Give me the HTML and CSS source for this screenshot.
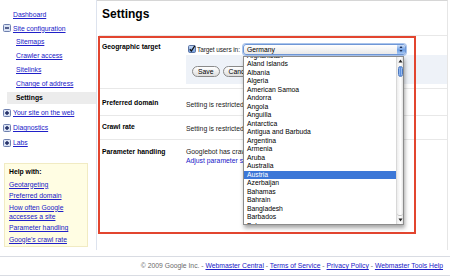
FILE: index.html
```html
<!DOCTYPE html>
<html>
<head>
<meta charset="utf-8">
<link rel="stylesheet" href="styles.css">
</head>
<body>
<div class="page">
  <div class="frame">
    <nav class="sidebar">
      <ul class="nav">
        <li class="nav-item"><a href="#">Dashboard</a></li>
        <li class="nav-item icon"><svg class="tog" viewBox="0 0 8 8" width="8" height="8"><rect x="0.5" y="0.5" width="7" height="7" rx="1" fill="#d9e2f3" stroke="#6d7fae"/><path d="M2 4H6" stroke="#1b2760" stroke-width="1.4"/></svg><a href="#">Site configuration</a></li>
        <li class="nav-sub"><a href="#">Sitemaps</a></li>
        <li class="nav-sub"><a href="#">Crawler access</a></li>
        <li class="nav-sub"><a href="#">Sitelinks</a></li>
        <li class="nav-sub"><a href="#">Change of address</a></li>
        <li class="nav-sub active">Settings</li>
        <li class="nav-item icon group first"><svg class="tog" viewBox="0 0 8 8" width="8" height="8"><rect x="0.5" y="0.5" width="7" height="7" rx="1" fill="#d9e2f3" stroke="#6d7fae"/><path d="M2 4H6M4 2V6" stroke="#1b2760" stroke-width="1.4"/></svg><a href="#">Your site on the web</a></li>
        <li class="nav-item icon group"><svg class="tog" viewBox="0 0 8 8" width="8" height="8"><rect x="0.5" y="0.5" width="7" height="7" rx="1" fill="#d9e2f3" stroke="#6d7fae"/><path d="M2 4H6M4 2V6" stroke="#1b2760" stroke-width="1.4"/></svg><a href="#">Diagnostics</a></li>
        <li class="nav-item icon group"><svg class="tog" viewBox="0 0 8 8" width="8" height="8"><rect x="0.5" y="0.5" width="7" height="7" rx="1" fill="#d9e2f3" stroke="#6d7fae"/><path d="M2 4H6M4 2V6" stroke="#1b2760" stroke-width="1.4"/></svg><a href="#">Labs</a></li>
      </ul>
      <div class="help">
        <div class="help-title">Help with:</div>
        <a class="help-link first" href="#">Geotargeting</a>
        <a class="help-link" href="#">Preferred domain</a>
        <a class="help-link" href="#">How often Google<br>accesses a site</a>
        <a class="help-link" href="#">Parameter handling</a>
        <a class="help-link" href="#">Google's crawl rate</a>
      </div>
    </nav>
    <main class="main">
      <h1 class="title">Settings</h1>
      <div class="settings">
        <div class="row row-geo">
          <div class="label">Geographic target</div>
          <div class="value">
            <div class="target-line">
              <svg class="check" viewBox="0 0 8 8" width="8" height="8"><defs><linearGradient id="cg" x1="0" y1="0" x2="0" y2="1"><stop offset="0" stop-color="#c9dcf7"/><stop offset="1" stop-color="#6f9de0"/></linearGradient></defs><rect x="0.5" y="0.5" width="7" height="7" rx="1.2" fill="url(#cg)" stroke="#5b74a3"/><path d="M1.8 4.2L3.4 6L6.8 0.8" fill="none" stroke="#111" stroke-width="1.3"/></svg>
              <span class="target-text">Target users in:</span>
              <div class="select">
                <span class="select-value">Germany</span>
                <span class="spinner"><svg viewBox="0 0 8 10" width="8" height="10"><path d="M2.5 4L4 2L5.5 4Z M2.5 6L4 8L5.5 6Z" fill="#1a2a50"/></svg></span>
                <div class="dropdown">
                  <ul class="options">
                    <li>Afghanistan</li>
                    <li>Aland Islands</li>
                    <li>Albania</li>
                    <li>Algeria</li>
                    <li>American Samoa</li>
                    <li>Andorra</li>
                    <li>Angola</li>
                    <li>Anguilla</li>
                    <li>Antarctica</li>
                    <li>Antigua and Barbuda</li>
                    <li>Argentina</li>
                    <li>Armenia</li>
                    <li>Aruba</li>
                    <li>Australia</li>
                    <li class="sel">Austria</li>
                    <li>Azerbaijan</li>
                    <li>Bahamas</li>
                    <li>Bahrain</li>
                    <li>Bangladesh</li>
                    <li>Barbados</li>
                    <li>Belarus</li>
                    <li>Belgium</li>
                  </ul>
                  <div class="scrollbar">
                    <svg class="arrow-up" viewBox="0 0 5 4" width="5" height="4"><path d="M0.5 3.5L2.5 0.5L4.5 3.5Z" fill="#222"/></svg>
                    <span class="thumb"></span>
                    <span class="track-end"></span>
                    <svg class="arrow-down" viewBox="0 0 5 4" width="5" height="4"><path d="M0.5 0.5L2.5 3.5L4.5 0.5Z" fill="#222"/></svg>
                  </div>
                </div>
              </div>
            </div>
            <div class="panel">
              <button class="btn">Save</button>
              <button class="btn">Cancel</button>
            </div>
          </div>
        </div>
        <div class="row row-pref">
          <div class="label">Preferred domain</div>
          <div class="value">Setting is restricted to root level sites only.</div>
        </div>
        <div class="row row-crawl">
          <div class="label">Crawl rate</div>
          <div class="value">Setting is restricted to root level sites only.</div>
        </div>
        <div class="row row-param">
          <div class="label">Parameter handling</div>
          <div class="value">Googlebot has crawled these parameters.<br><a class="plain" href="#">Adjust parameter settings</a></div>
        </div>
      </div>
    </main>
  </div>
  <footer class="footer">
    <span class="muted">© 2009 Google Inc. - </span><a href="#">Webmaster Central</a><span class="muted"> - </span><a href="#">Terms of Service</a><span class="muted"> - </span><a href="#">Privacy Policy</a><span class="muted"> - </span><a href="#">Webmaster Tools Help</a>
  </footer>
  <div class="annot"></div>
</div>
</body>
</html>
```

FILE: styles.css
```css
* { box-sizing: border-box; margin: 0; padding: 0; }
html, body { width: 450px; height: 276px; overflow: hidden; background: #fff; }
body { font-family: "Liberation Sans", Arial, sans-serif; font-size: 6.8px; color: #000; }
a { color: #2020c8; text-decoration: underline; }

.page { position: relative; width: 450px; height: 276px; }
.frame { display: flex; height: 250px; }

/* sidebar */
.sidebar { width: 97px; flex: none; border-right: 1px solid #dde3ee; padding-top: 7px; }
.nav { list-style: none; }
.nav-item { display: flex; align-items: center; height: 14px; padding-left: 13px; }
.nav-item.icon { padding-left: 3px; }
.nav-item .tog { flex: none; margin-right: 2px; display: block; }
.nav-item.group { height: 15px; }
.nav-item.group.first { margin-top: 1px; }
.nav-sub { height: 14px; line-height: 14px; padding-left: 16px; }
.nav-sub.active { margin: 1px 0 1px 7px; height: 12px; line-height: 12px; padding-left: 9px; background: #ececec; font-weight: bold; color: #000; }

.help { margin: 13px 0 0 4px; width: 84px; height: 84px; background: #fffde3; border: 1px solid #f1ebc3; padding: 2px 0 0 4px; }
.help-title { font-weight: bold; line-height: 11px; }
.help-link { display: block; line-height: 9px; margin-top: 2.5px; }

/* main */
.main { flex: 1; margin-right: 2px; border-top: 1px solid #d6d6d6; border-right: 1px solid #e6e6e6; padding-left: 2px; }
.title { font-size: 12px; line-height: 14px; font-weight: bold; margin: 6px 0 14px; padding-left: 3px; }

.settings { border-top: 1px solid #e8e8e8; }
.row { display: flex; border-bottom: 1px solid #e8e8e8; }
.row-param { border-bottom: none; }
.label { width: 87px; flex: none; padding-left: 3px; font-weight: bold; line-height: 9px; }
.value { flex: 1; line-height: 9px; color: #222; }

.row-geo .label { padding-top: 6px; }
.row-geo .value { padding-top: 7px; padding-bottom: 4px; }
.row-pref .label { padding: 9px 0 8px 3px; }
.row-pref .value { padding-top: 10.5px; }
.row-crawl .label { padding: 6px 0 8px 3px; }
.row-crawl .value { padding-top: 7.5px; }
.row-param .label { padding: 6.5px 0 0 3px; }
.row-param .value { padding-top: 8px; line-height: 8.7px; }
.plain { text-decoration: none; }

.target-line { display: flex; align-items: center; height: 12px; padding-left: 2px; }
.check { display: block; flex: none; }
.target-text { width: 47px; padding-left: 1px; flex: none; white-space: nowrap; font-size: 6.5px; letter-spacing: -0.1px; }

.select { position: relative; width: 163px; height: 11px; border: 1px solid #6f97d6; border-radius: 3px; box-shadow: 0 0 0 1px #a9c4ec; background: linear-gradient(#ffffff, #e9e9e9); display: flex; align-items: center; }
.select-value { flex: 1; padding-left: 3px; line-height: 9px; color: #000; }
.spinner { width: 8px; height: 9px; border-radius: 0 2px 2px 0; background: linear-gradient(#cfe0f8, #6e9fe4 55%, #a9c8f2); display: flex; align-items: center; justify-content: center; overflow: hidden; }
.spinner svg { display: block; }

.dropdown { position: absolute; top: 11px; left: -1px; width: 161px; height: 169px; background: #fff; border: 1px solid #8c8c8c; box-shadow: 1px 3px 4px rgba(0,0,0,0.35); display: flex; overflow: hidden; z-index: 2; }
.options { list-style: none; flex: 1; margin-top: -4.6px; }
.options li { height: 8.5px; line-height: 8.5px; padding-left: 3px; color: #000; white-space: nowrap; }
.options li.sel { background: #3c77d7; color: #fff; }
.scrollbar { position: relative; width: 7px; flex: none; border-left: 1px solid #d8d8d8; background: linear-gradient(to right, #ececec, #ffffff 60%, #e2e2e2); }
.arrow-up { position: absolute; top: 2px; left: 0.5px; }
.arrow-down { position: absolute; bottom: 2px; left: 0.5px; }
.thumb { position: absolute; top: 9px; left: 0.5px; width: 5px; height: 11px; border-radius: 3px; border: 1px solid #4d79bf; background: linear-gradient(to right, #a9c7f3, #5b8fe0 50%, #b8d2f6); }
.track-end { position: absolute; bottom: 8px; left: 0; width: 6px; height: 4px; border-bottom: 1px solid #bbb; border-radius: 0 0 3px 3px; }

.panel { margin-top: 0; height: 29px; background: #eef2f8; padding: 11px 0 0 6px; display: flex; gap: 3px; align-items: flex-start; }
.btn { height: 11px; padding: 0 5px; border: 1px solid #8a8a8a; border-radius: 6px; background: linear-gradient(#ffffff, #dedede); font-family: "Liberation Sans", Arial, sans-serif; font-size: 6.8px; line-height: 9px; color: #000; }

/* footer */
.footer { margin-top: 6px; border-top: 1px solid #d9dce3; border-bottom: 1px solid #d9dce3; padding: 4px 7px 5px 0; line-height: 9px; text-align: right; height: 20px; white-space: nowrap; }
.muted { color: #6b6b6b; }

/* annotation */
.annot { position: absolute; left: 98px; top: 36px; width: 318px; height: 198px; border: 2px solid #e2452f; pointer-events: none; }
```
